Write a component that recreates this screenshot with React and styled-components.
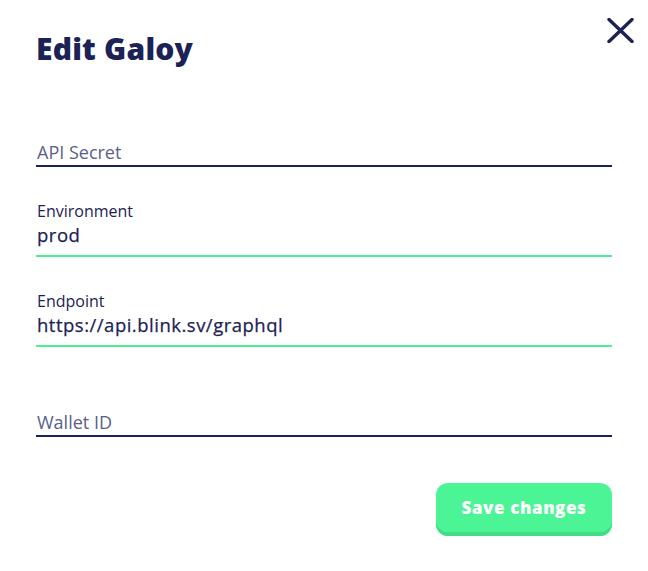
import React from 'react';
import styled, { createGlobalStyle } from 'styled-components';

const navy = '#1c2255';
const green = '#4bf595';

const GlobalStyle = createGlobalStyle`
  html, body {
    margin: 0;
    padding: 0;
    background: #ffffff;
  }
  body {
    font-family: "Open Sans", Lato, sans-serif;
    color: ${navy};
  }
`;

const fields = [
  { name: 'API Secret', value: '' },
  { name: 'Environment', value: 'prod' },
  { name: 'Endpoint', value: 'https://api.blink.sv/graphql' },
  { name: 'Wallet ID', value: '' }
];

export default function App () {
  return (
    <>
      <GlobalStyle />
      <Dialog>
        <Header>
          <Title>Edit Galoy</Title>
          <Close aria-label='close'>
            <svg width='27' height='25' viewBox='0 0 27 25'>
              <path d='M2 1.5 L25 23.5 M25 1.5 L2 23.5' stroke={navy} strokeWidth='3.4' strokeLinecap='round' fill='none' />
            </svg>
          </Close>
        </Header>
        <Form>
          {fields.map(f => (
            <Field key={f.name} filled={f.value !== ''}>
              {f.value !== '' ? (
                <>
                  <Label>{f.name}</Label>
                  <Value>{f.value}</Value>
                </>
              ) : (
                <Placeholder>{f.name}</Placeholder>
              )}
            </Field>
          ))}
        </Form>
        <Actions>
          <Save>Save changes</Save>
        </Actions>
      </Dialog>
    </>
  );
}

const Dialog = styled.div`
  width: 648px;
  height: 571px;
  box-sizing: border-box;
  padding: 18px 36px 0 36px;
  display: flex;
  flex-direction: column;
`;

const Header = styled.div`
  display: flex;
  justify-content: space-between;
  align-items: flex-start;
  height: 59px;
`;

const Title = styled.h1`
  margin: 12px 0 0 0;
  font-family: "Open Sans", sans-serif;
  font-weight: 800;
  font-size: 30px;
  line-height: 38px;
  letter-spacing: 0.2px;
  color: ${navy};
`;

const Close = styled.button`
  border: none;
  background: none;
  padding: 0;
  margin-right: -22px;
  width: 27px;
  height: 25px;
  cursor: pointer;
  display: flex;
`;

const Form = styled.div`
  display: flex;
  flex-direction: column;
`;

const Field = styled.div`
  height: 90px;
  box-sizing: border-box;
  display: flex;
  flex-direction: column;
  justify-content: flex-end;
  border-bottom: 2px solid ${p => p.filled ? '#48f091' : navy};
`;

const Label = styled.div`
  font-size: 16px;
  line-height: 18px;
  padding-left: 1px;
  color: ${navy};
  margin-bottom: 3px;
`;

const Value = styled.div`
  font-size: 18.5px;
  line-height: 24px;
  padding-left: 1px;
  font-weight: 500;
  letter-spacing: 0.5px;
  color: ${navy};
  -webkit-text-stroke: 0.25px ${navy};
  padding-bottom: 8px;
`;

const Placeholder = styled.div`
  font-size: 18px;
  line-height: 24px;
  padding-left: 1px;
  color: #5a6189;
  padding-bottom: 1px;
`;

const Actions = styled.div`
  display: flex;
  justify-content: flex-end;
  margin-top: 46px;
`;

const Save = styled.button`
  width: 176px;
  height: 53px;
  border: none;
  border-radius: 12px;
  background: ${green};
  box-shadow: inset 0 -4px 0 #43dd86;
  color: #ffffff;
  font-family: "Open Sans", sans-serif;
  font-weight: 800;
  font-size: 17px;
  letter-spacing: 0.6px;
  padding: 0 0 4px 0;
  cursor: pointer;
`;
